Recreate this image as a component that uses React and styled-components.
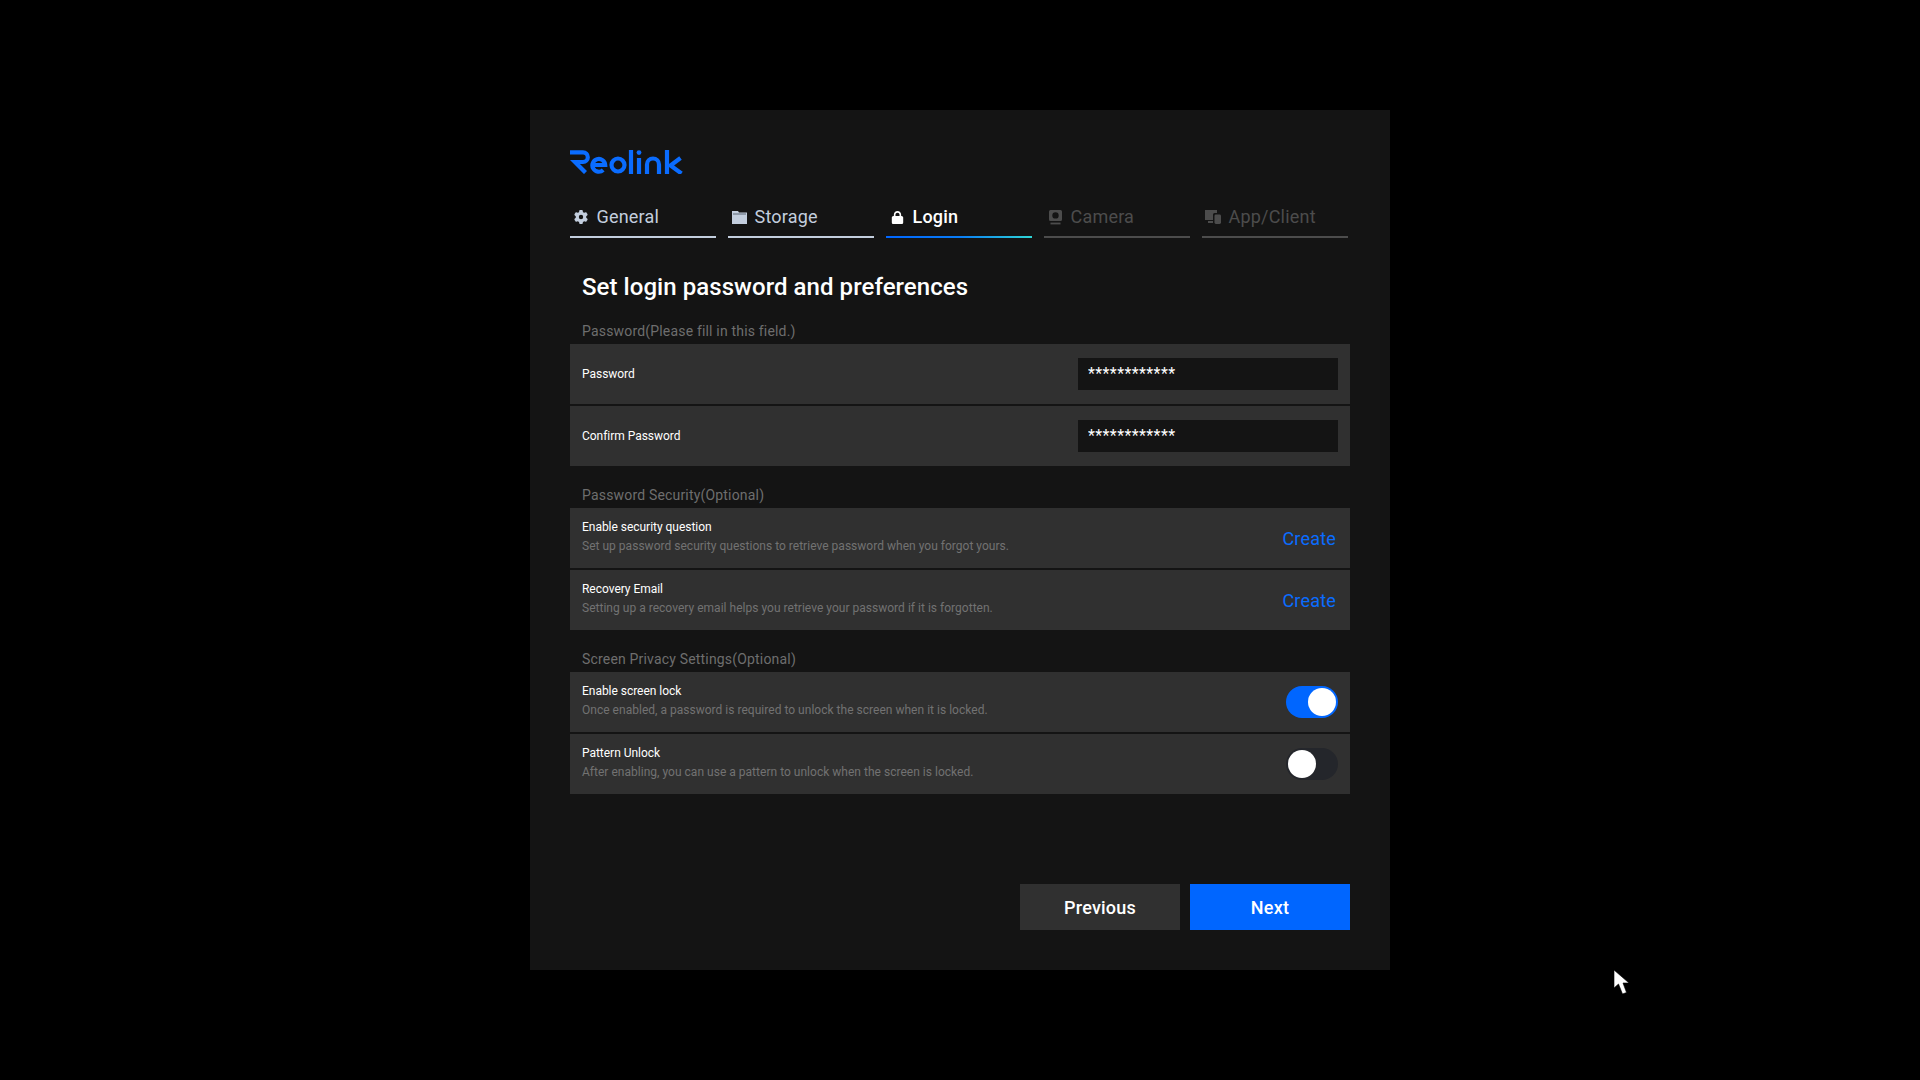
import React from "react";
import styled, { createGlobalStyle, css } from "styled-components";
import { FaGear, FaLock } from "react-icons/fa6";

const GlobalStyle = createGlobalStyle`
  html, body {
    margin: 0;
    padding: 0;
    background: #000;
    font-family: Roboto, "Liberation Sans", sans-serif;
  }
`;

const Page = styled.div`
  position: relative;
  width: 100%;
  height: 100vh;
  display: flex;
  align-items: center;
  justify-content: center;
  overflow: hidden;
`;

const Panel = styled.div`
  width: 860px;
  height: 860px;
  box-sizing: border-box;
  padding: 40px;
  background: #141414;
  display: flex;
  flex-direction: column;
`;

const LogoMark = styled.svg`
  display: block;
  width: 113px;
  height: 24px;
  flex: none;
`;

const Tabs = styled.div`
  display: flex;
  gap: 12px;
  margin-top: 30px;
`;

const tabStates = {
  done: css`
    color: #c3cede;
    &::after { background: #c3cede; }
  `,
  active: css`
    color: #fff;
    &::after { background: linear-gradient(90deg, #0066ff 0%, #0a7cf5 50%, #2fd6d6 100%); }
  `,
  off: css`
    color: #4c4c4c;
    &::after { background: #4c4c4c; }
  `,
};

const Tab = styled.div`
  position: relative;
  width: 146px;
  height: 34px;
  box-sizing: border-box;
  padding: 0 0 8px 3px;
  display: flex;
  align-items: center;
  font-size: 18px;
  line-height: 26px;
  font-weight: ${(p) => (p.$state === "active" ? 500 : 400)};
  letter-spacing: 0.2px;
  ${(p) => tabStates[p.$state]}
  &::after {
    content: "";
    position: absolute;
    left: 0;
    right: 0;
    bottom: 0;
    height: 2px;
  }
`;

const TabIcon = styled.span`
  width: 16px;
  height: 16px;
  flex: none;
  margin-right: 7.5px;
  display: flex;
  align-items: center;
  justify-content: center;
  svg { display: block; }
`;

const Title = styled.h1`
  margin: 34px 0 0 12px;
  height: 30px;
  font-size: 24px;
  line-height: 31px;
  font-weight: 500;
  color: #fff;
  letter-spacing: 0.06px;
`;

const Section = styled.section`
  margin-top: 16px;
`;

const SectionLabel = styled.div`
  height: 26px;
  padding-left: 12px;
  font-size: 14px;
  line-height: 26px;
  color: #6e6e6e;
  letter-spacing: 0.18px;
`;

const Rows = styled.div`
  display: flex;
  flex-direction: column;
  gap: 2px;
`;

const Row = styled.div`
  height: 60px;
  box-sizing: border-box;
  padding: 0 12px;
  background: #303030;
  display: flex;
  align-items: center;
  justify-content: space-between;
`;

const RowText = styled.div`
  display: flex;
  flex-direction: column;
  gap: 1px;
  margin-top: -4px;
`;

const RowTitle = styled.div`
  font-size: 12px;
  line-height: 18px;
  color: #fff;
  letter-spacing: -0.03px;
`;

const RowDesc = styled.div`
  font-size: 12px;
  line-height: 18px;
  color: #727272;
  letter-spacing: 0.02px;
`;

const PasswordInput = styled.input`
  width: 260px;
  height: 32px;
  box-sizing: border-box;
  padding: 0 10px 2px;
  border: 0;
  outline: 0;
  background: #141414;
  color: #fff;
  font-family: inherit;
  font-size: 16px;
  letter-spacing: 0.4px;
`;

const CreateLink = styled.a`
  font-size: 18px;
  color: #0a6cff;
  letter-spacing: 0.2px;
  margin-right: 2px;
  cursor: pointer;
`;

const Toggle = styled.div`
  width: 52px;
  height: 32px;
  box-sizing: border-box;
  padding: 2px;
  border-radius: 16px;
  background: ${(p) => (p.$on ? "#0066ff" : "#24262b")};
  display: flex;
  justify-content: ${(p) => (p.$on ? "flex-end" : "flex-start")};
  &::before {
    content: "";
    width: 28px;
    height: 28px;
    border-radius: 50%;
    background: #fff;
  }
`;

const Footer = styled.div`
  margin-top: auto;
  display: flex;
  justify-content: flex-end;
  gap: 10px;
`;

const Button = styled.button`
  width: 160px;
  height: 46px;
  border: 0;
  padding: 0;
  background: ${(p) => (p.$primary ? "#0066ff" : "#303030")};
  color: #fff;
  font-family: inherit;
  font-size: 18px;
  font-weight: 500;
  letter-spacing: 0.2px;
`;

const Cursor = styled.svg`
  position: absolute;
  left: 1613px;
  top: 969px;
  width: 18px;
  height: 27px;
`;

const Logo = () => (
  <LogoMark viewBox="0 0 113 24" fill="none" stroke="#0a6cff" strokeWidth="4.2" aria-label="Reolink">
    <path d="M0 2.4 H13 A4.8 4.8 0 0 1 13 12 H5 L15.5 22.6" />
    <path d="M22.8 15 H35.2 A6.4 6.4 0 1 0 33.2 20" />
    <circle cx="48" cy="15" r="6.5" />
    <path d="M61 0 V24" />
    <path d="M69 8 V24" />
    <circle cx="69" cy="2.6" r="2.4" fill="#0a6cff" stroke="none" />
    <path d="M77 24 V14.5 A6 6 0 0 1 89 14.5 V24" />
    <path d="M97 0 V24" />
    <path d="M110.5 8 L100.5 15.5 L111.5 23.5" />
  </LogoMark>
);

const StorageIcon = () => (
  <svg width="15" height="13" viewBox="0 0 15 13">
    <path d="M0 0h6l1 1.5h8V13H0z" fill="currentColor" />
    <rect x="1" y="2.5" width="13" height="1" fill="#5d6675" />
  </svg>
);

const CameraIcon = () => (
  <svg width="13" height="15" viewBox="0 0 13 15" fill="currentColor">
    <path fillRule="evenodd" d="M1.5 0h10A1.5 1.5 0 0 1 13 1.5v8A1.5 1.5 0 0 1 11.5 11h-10A1.5 1.5 0 0 1 0 9.5v-8A1.5 1.5 0 0 1 1.5 0zm5 2.2a3.2 3.2 0 1 0 0 6.4 3.2 3.2 0 0 0 0-6.4z" />
    <rect x="1.5" y="12.6" width="10" height="1.8" />
  </svg>
);

const DevicesIcon = () => (
  <svg width="16" height="14" viewBox="0 0 16 14" fill="currentColor">
    <path d="M0 0h12v3H9.5A1.5 1.5 0 0 0 8 4.5V10H0z" />
    <rect x="3" y="11" width="5" height="2" />
    <rect x="9.5" y="4.5" width="6.5" height="9.5" rx="1.4" />
  </svg>
);

const TABS = [
  { label: "General", state: "done", icon: <FaGear size={14} /> },
  { label: "Storage", state: "done", icon: <StorageIcon /> },
  { label: "Login", state: "active", icon: <FaLock size={13} /> },
  { label: "Camera", state: "off", icon: <CameraIcon /> },
  { label: "App/Client", state: "off", icon: <DevicesIcon /> },
];

const TextRow = ({ title, desc, children }) => (
  <Row>
    <RowText>
      <RowTitle>{title}</RowTitle>
      <RowDesc>{desc}</RowDesc>
    </RowText>
    {children}
  </Row>
);

const App = () => (
  <Page>
    <GlobalStyle />
    <Panel>
      <Logo />
      <Tabs>
        {TABS.map((t) => (
          <Tab key={t.label} $state={t.state}>
            <TabIcon>{t.icon}</TabIcon>
            {t.label}
          </Tab>
        ))}
      </Tabs>
      <Title>Set login password and preferences</Title>

      <Section>
        <SectionLabel>Password(Please fill in this field.)</SectionLabel>
        <Rows>
          <Row>
            <RowTitle>Password</RowTitle>
            <PasswordInput readOnly value="************" />
          </Row>
          <Row>
            <RowTitle>Confirm Password</RowTitle>
            <PasswordInput readOnly value="************" />
          </Row>
        </Rows>
      </Section>

      <Section>
        <SectionLabel>Password Security(Optional)</SectionLabel>
        <Rows>
          <TextRow
            title="Enable security question"
            desc="Set up password security questions to retrieve password when you forgot yours."
          >
            <CreateLink>Create</CreateLink>
          </TextRow>
          <TextRow
            title="Recovery Email"
            desc="Setting up a recovery email helps you retrieve your password if it is forgotten."
          >
            <CreateLink>Create</CreateLink>
          </TextRow>
        </Rows>
      </Section>

      <Section>
        <SectionLabel>Screen Privacy Settings(Optional)</SectionLabel>
        <Rows>
          <TextRow
            title="Enable screen lock"
            desc="Once enabled, a password is required to unlock the screen when it is locked."
          >
            <Toggle $on />
          </TextRow>
          <TextRow
            title="Pattern Unlock"
            desc="After enabling, you can use a pattern to unlock when the screen is locked."
          >
            <Toggle />
          </TextRow>
        </Rows>
      </Section>

      <Footer>
        <Button>Previous</Button>
        <Button $primary>Next</Button>
      </Footer>
    </Panel>
    <Cursor viewBox="0 0 18 27">
      <path d="M1 1 L1 19 L5.5 15 L9.5 25 L13.5 23.5 L10 14 L16 14 Z" fill="#fff" stroke="#000" strokeWidth="0.6" />
    </Cursor>
  </Page>
);

export default App;
